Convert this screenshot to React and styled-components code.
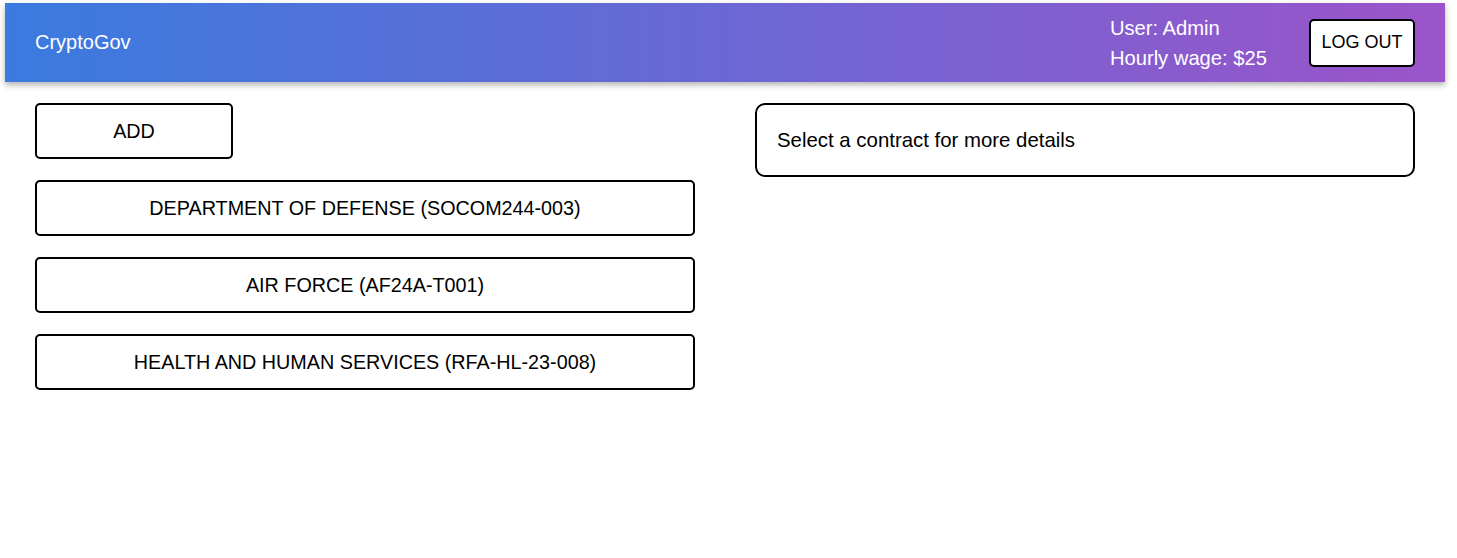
import React from 'react'
import styled, { createGlobalStyle } from 'styled-components'

const GlobalStyle = createGlobalStyle`
  body {
    margin: 0;
    background: #fff;
    font-family: "Liberation Sans", Arial, sans-serif;
    color: #000;
  }
`

const contracts = [
  'DEPARTMENT OF DEFENSE (SOCOM244-003)',
  'AIR FORCE (AF24A-T001)',
  'HEALTH AND HUMAN SERVICES (RFA-HL-23-008)',
]

function App() {
  return (
    <>
      <GlobalStyle />
      <Page>
        <Header>
          <Brand>CryptoGov</Brand>
          <UserArea>
            <UserInfo>
              <div>User: Admin</div>
              <div>Hourly wage: $25</div>
            </UserInfo>
            <LogOut>LOG OUT</LogOut>
          </UserArea>
        </Header>
        <Main>
          <ContractList>
            <OutlineButton $small>ADD</OutlineButton>
            {contracts.map((c) => (
              <OutlineButton key={c}>{c}</OutlineButton>
            ))}
          </ContractList>
          <Details>Select a contract for more details</Details>
        </Main>
      </Page>
    </>
  )
}

export default App

const Page = styled.div`
  width: 1440px;
  margin: 3px 0 0 5px;
`

const Header = styled.header`
  height: 79px;
  padding: 0 30px;
  box-sizing: border-box;
  display: flex;
  align-items: center;
  justify-content: space-between;
  background: linear-gradient(to right, #3a7bdf, #9b54c9);
  box-shadow: 0 3px 6px rgba(0, 0, 0, 0.3);
  color: #fff;
  font-size: 20px;
`

const Brand = styled.div`
  font-size: 20px;
`

const UserArea = styled.div`
  display: flex;
  align-items: center;
  gap: 42px;
`

const UserInfo = styled.div`
  line-height: 30px;
  font-size: 20.2px;
`

const LogOut = styled.button`
  height: 48px;
  padding: 0 10.5px;
  background: #fff;
  border: 2px solid #000;
  border-radius: 5px;
  font-family: inherit;
  font-size: 18px;
  color: #000;
  cursor: pointer;
`

const Main = styled.main`
  display: grid;
  grid-template-columns: 660px 660px;
  gap: 60px;
  padding: 21px 30px;
  align-items: start;
`

const ContractList = styled.div`
  display: flex;
  flex-direction: column;
  align-items: flex-start;
  gap: 21px;
`

const OutlineButton = styled.button`
  width: ${(p) => (p.$small ? '198px' : '100%')};
  height: 56px;
  background: #fff;
  border: 2px solid #000;
  border-radius: 5px;
  font-family: inherit;
  font-size: 19.75px;
  color: #000;
  cursor: pointer;
`

const Details = styled.div`
  border: 2px solid #000;
  border-radius: 10px;
  padding: 24px 20px 23px;
  font-size: 20.4px;
  line-height: 23px;
`
